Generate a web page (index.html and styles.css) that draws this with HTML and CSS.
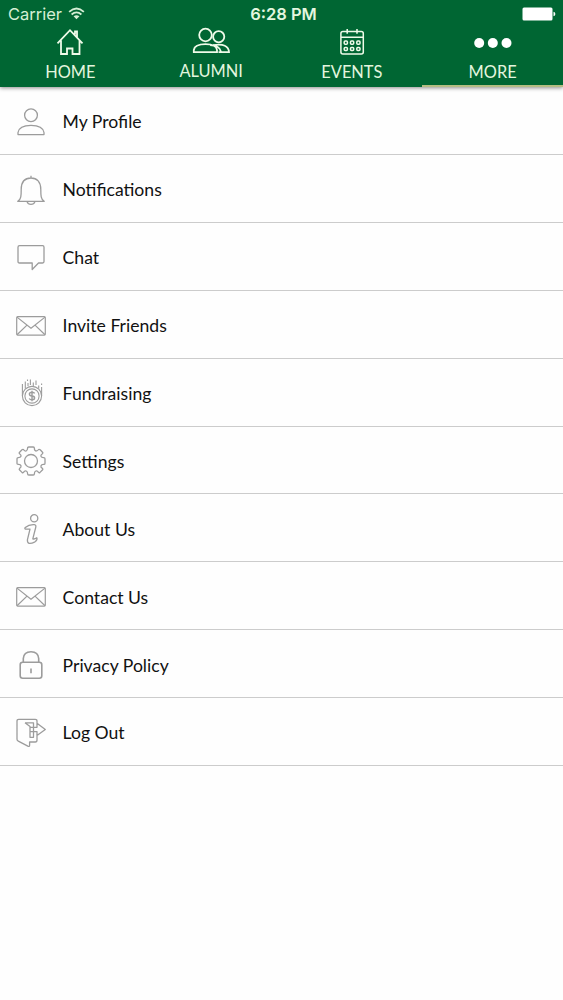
FILE: index.html
```html
<!DOCTYPE html>
<html lang="en">
<head>
<meta charset="utf-8">
<title>More</title>
<link rel="stylesheet" href="styles.css">
</head>
<body>
<header class="header">
  <div class="status">
    <div class="carrier">Carrier
      <svg class="wifi" width="17" height="13" viewBox="0 0 18 13"><path d="M1.2 4.7Q9-2.3 16.8 4.7M3.8 7.6Q9 3.1 14.2 7.6" fill="none" stroke="currentColor" stroke-width="1.9"/><path d="M5.9 9.5Q9 7.2 12.1 9.5L9 12.6Z" fill="currentColor"/></svg>
    </div>
    <div class="time">6:28 PM</div>
    <svg class="battery" width="34" height="14" viewBox="0 0 34 14"><rect x=".5" y=".5" width="30" height="13" rx="1.5" fill="#fff"/><path d="M31.5 4.8Q33.4 5 33.4 7T31.5 9.2Z" fill="#fff"/></svg>
  </div>
  <nav class="tabs">
    <a class="tab"><svg class="tab-icon" viewBox="0 0 40 30"><path d="M7.5 15.3 20 2.2 32.5 15.3M11 12.5V26H17V20.5H22.5V26H29.5V12.5M25 6.5V3.5H27V9"/></svg><span>HOME</span></a>
    <a class="tab raised"><svg class="tab-icon" viewBox="0 0 40 30"><circle cx="14.5" cy="9" r="6.3"/><circle cx="27.7" cy="10.7" r="5.6"/><path d="M2.8 26.2V24Q3.7 18.2 14.5 18.2T26 24V26.2ZM22 19.2Q37.6 16.7 38 26.2H27.5M19 19.2Q28.5 19.3 30 25.8"/></svg><span>ALUMNI</span></a>
    <a class="tab"><svg class="tab-icon calendar" viewBox="0 0 40 30"><rect x="8.9" y="3.6" width="22.4" height="22.3" rx="2"/><path d="M9 9.3H31M15.2 1V5.7M25 1V5.7"/><g><rect x="12.2" y="13.1" width="3.2" height="3.2" rx="1"/><rect x="18.5" y="13.1" width="3.2" height="3.2" rx="1"/><rect x="24.8" y="13.1" width="3.2" height="3.2" rx="1"/><rect x="12.2" y="19.4" width="3.2" height="3.2" rx="1"/><rect x="18.5" y="19.4" width="3.2" height="3.2" rx="1"/><rect x="24.8" y="19.4" width="3.2" height="3.2" rx="1"/></g></svg><span>EVENTS</span></a>
    <a class="tab active"><svg class="tab-icon dots" viewBox="0 0 40 30"><circle cx="6.2" cy="15" r="5"/><circle cx="19.8" cy="15" r="5"/><circle cx="33.5" cy="15" r="5"/></svg><span>MORE</span></a>
  </nav>
</header>
<main class="menu">
  <a class="row"><svg class="icon" viewBox="0 0 32 32"><circle cx="16" cy="9.2" r="6.4"/><path d="M3 28.6V26.5C3.8 21.5 9 19.3 16 19.3S28.2 21.5 29 26.5V28.6Z"/></svg>My Profile</a>
  <a class="row"><svg class="icon" viewBox="0 0 32 32"><path d="M16 1.8V4M2.8 27.4C6.3 25.2 6.2 21 6.2 15.5C6.2 8 10 4 16 4S25.8 8 25.8 15.5C25.8 21 25.7 25.2 29.2 27.4ZM12 27.6Q13 30.4 16 30.4T20 27.6"/></svg>Notifications</a>
  <a class="row"><svg class="icon" viewBox="0 0 32 32"><path d="M4.5 3.7H27.6Q29 3.7 29 5.2V19.6Q29 21 27.6 21H23.5L17.2 27.5V21H4.5Q3 21 3 19.5V5.2Q3 3.7 4.5 3.7Z"/></svg>Chat</a>
  <a class="row"><svg class="icon mail" viewBox="0 0 32 32"><rect x="1.7" y="6.7" width="28.6" height="18.4" rx="1"/><path d="M2 7.1 16 18.3 30 7.1M2 24.7 12 15.1M30 24.7 20 15.1"/></svg>Invite Friends</a>
  <a class="row"><svg class="icon coin" viewBox="0 0 32 32"><circle cx="17" cy="19" r="9.6"/><circle cx="17" cy="19" r="7.1"/><path d="M7.4 19V7M26.6 19V10M10.3 11.5V4.5M13 9V6M15.4 8V2.5M18.3 9.5V5.5M21 8V3.5M23.7 11.5V8.5M26.6 8V6.5M12.5 4V2.5"/><path class="dollar" d="M19.7 16.4Q19 15.2 17 15.2Q14.4 15.2 14.4 17T17 19T19.6 21T17 22.8Q15 22.8 14.2 21.5M17 13.8V24.2"/></svg>Fundraising</a>
  <a class="row"><svg class="icon" viewBox="0 0 32 32"><circle cx="16" cy="16" r="6.5"/><path d="M12.6 3.2Q12.6 2 13.8 2H18.2Q19.4 2 19.4 3.2Q19.4 6 21 6T23.6 4.5Q24.3 4 25.2 4.8L27.5 7.2Q28.2 8 27.4 8.7Q25.3 10.2 26 11.5T28.8 12.6Q30 12.6 30 13.8V18.2Q30 19.4 28.8 19.4Q26.6 19.2 26 20.7T27.4 23.4Q28.2 24.2 27.4 25L25 27.4Q24.2 28.1 23.5 27.4Q22.3 25.5 20.8 26T19.4 28.8Q19.4 30 18.2 30H13.8Q12.6 30 12.6 28.8Q12.7 26.6 11.2 26T8.5 27.4Q7.8 28.1 7 27.4L4.6 25Q3.8 24.2 4.6 23.4Q6.5 22.2 6 20.7T3.2 19.4Q2 19.4 2 18.2V13.8Q2 12.6 3.2 12.6Q5.5 12.6 6 11.3T4.6 8.7Q3.8 8 4.6 7.2L7 4.8Q7.8 4 8.5 4.6Q10 6.5 11.2 6T12.6 3.2Z"/></svg>Settings</a>
  <a class="row"><svg class="icon" viewBox="0 0 32 32"><circle cx="19.2" cy="5.3" r="3.6"/><path d="M10.3 14.5Q14 11.3 19.4 11.7Q21.4 12 20.7 14.5L17.8 25.8Q19.5 26.5 21.8 24.8Q22.7 27 20 28.8Q12 32.8 12.4 26.8L15 16.2H10.5Q9.3 15.7 10.3 14.5Z"/></svg>About Us</a>
  <a class="row"><svg class="icon mail" viewBox="0 0 32 32"><rect x="1.7" y="6.7" width="28.6" height="18.4" rx="1"/><path d="M2 7.1 16 18.3 30 7.1M2 24.7 12 15.1M30 24.7 20 15.1"/></svg>Contact Us</a>
  <a class="row"><svg class="icon lock" viewBox="0 0 32 32"><rect x="5.2" y="13.2" width="21.6" height="16" rx="2.5"/><path d="M8.3 13V9.5Q8.7 2.7 16 2.7T23.7 9.5V13M16 19.5V24.2"/></svg>Privacy Policy</a>
  <a class="row"><svg class="icon" viewBox="0 0 32 32"><path d="M22 6.3V4Q22 2.3 20.3 2.3H3.7Q2 2.3 2 4V22.3Q2 23.7 3.3 24.2L12.8 29.2Q14.6 30 14.6 28.2V25H20.3Q22 25 22 23V18.5M10 5.8H18.5V20.3H15V9.5L10 5.8M15 10.3H22V6.3L30.3 12.5 22 18.5V14.6H15Z"/></svg>Log Out</a>
</main>
</body>
</html>
```
FILE: styles.css
```css
* { box-sizing: border-box; }
body {
  margin: 0;
  min-height: 1000px;
  background: #fefefe;
  color: #111;
  font-family: Lato, "Open Sans", sans-serif;
}
.header {
  position: relative;
  height: 87px;
  background: #006633;
  color: #e3f6df;
  box-shadow: 0 1px 4px rgba(0, 0, 0, .45);
}
.status {
  display: grid;
  grid-template-columns: 1fr auto 1fr;
  align-items: center;
  height: 28px;
  padding: 0 7px 0 8px;
  font: 16.5px Inter, sans-serif;
}
.carrier { display: flex; align-items: center; gap: 6px; color: #d5efd5; }
.wifi { margin-top: -2px; }
.time { padding-left: 3px; font-weight: 600; }
.battery { justify-self: end; }
.tabs { display: grid; grid-template-columns: repeat(4, 1fr); height: 59px; }
.tab {
  display: flex;
  flex-direction: column;
  align-items: center;
  font-size: 16.4px;
  line-height: 20px;
  border-bottom: 2px solid transparent;
}
.tab.active { border-color: #b4bd83; }
.tab-icon {
  width: 40px;
  height: 30px;
  margin-bottom: 4px;
  fill: none;
  stroke: #effbe9;
  stroke-width: 1.8;
}
.raised .tab-icon { margin-top: -2px; margin-bottom: 5px; }
.calendar { stroke-width: 1.5; }
.dots { fill: #fff; stroke: none; }
.menu { display: flex; flex-direction: column; }
.row {
  display: flex;
  align-items: center;
  gap: 15.6px;
  height: 67.92px;
  padding: 2.7px 0 0 15px;
  border-bottom: 1px solid #ccc;
  font-size: 17.6px;
}
.icon {
  width: 32px;
  height: 32px;
  fill: none;
  stroke: #9c9c9c;
  stroke-width: 1.3;
  stroke-linejoin: round;
}
.mail { stroke-width: 1.2; }
.coin { stroke-width: 1.1; }
.dollar { stroke-width: 1.4; }
.lock { stroke-width: 1.6; }
```
